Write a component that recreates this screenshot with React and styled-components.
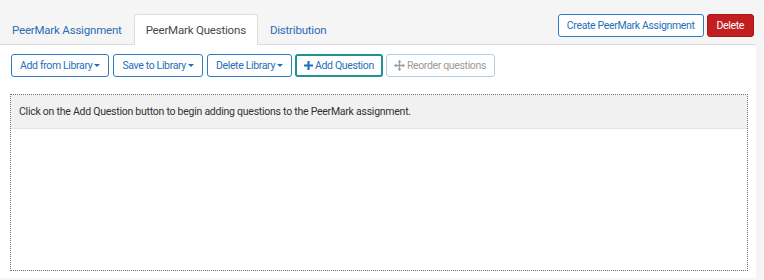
import styled, { createGlobalStyle } from "styled-components";

const GlobalStyle = createGlobalStyle`
  html, body {
    margin: 0;
    padding: 0;
    background: #f5f5f5;
    font-family: Roboto, "Liberation Sans", Arial, sans-serif;
  }
`;

const Panel = styled.div`
  width: 756px;
  height: 278px;
  display: flex;
  flex-direction: column;
`;

const Header = styled.div`
  height: 45px;
  box-sizing: border-box;
  display: flex;
  align-items: flex-end;
  justify-content: space-between;
  border-bottom: 1px solid #dcdcdc;
  padding-right: 2px;
`;

const Tabs = styled.div`
  display: flex;
  align-items: flex-end;
`;

const Tab = styled.div`
  height: 31px;
  box-sizing: border-box;
  padding: 0 11px;
  margin-bottom: -1px;
  display: flex;
  align-items: center;
  font-size: 11.5px;
  letter-spacing: -0.2px;
  color: ${(p) => (p.$active ? "#4a4a4a" : "#2b6cb5")};
  background: ${(p) => (p.$active ? "#fff" : "transparent")};
  border: 1px solid ${(p) => (p.$active ? "#dcdcdc" : "transparent")};
  border-bottom: none;
  border-radius: 4px 4px 0 0;
`;

const HeaderActions = styled.div`
  display: flex;
  gap: 3px;
  align-self: flex-start;
  margin-top: 14px;
`;

const Button = styled.button`
  height: 23px;
  box-sizing: border-box;
  padding: 0 8px;
  display: inline-flex;
  align-items: center;
  gap: 2px;
  font-family: inherit;
  font-size: 10.5px;
  letter-spacing: -0.35px;
  border-radius: 3px;
  cursor: pointer;
  background: #fff;
  color: #1f6fba;
  border: 1px solid #2f7cc4;
`;

const DangerButton = styled(Button)`
  background: #c11f1f;
  border-color: #a81818;
  color: #fff;
  padding: 0 9px;
`;

const FocusButton = styled(Button)`
  border: 2px solid #1e9295;
  padding: 0 7px;
  margin-left: -1px;
`;

const DisabledButton = styled(Button)`
  color: #9a9a9a;
  border-color: #b3cde3;
  cursor: default;
  padding: 0 8px 0 7px;
  margin-left: -1px;
`;

const Body = styled.div`
  flex: 1;
  background: #fff;
  padding: 9px 8px 7px 11px;
  display: flex;
  flex-direction: column;
`;

const Toolbar = styled.div`
  display: flex;
  gap: 4px;
`;

const Caret = styled.span`
  display: inline-block;
  width: 0;
  height: 0;
  border-left: 3px solid transparent;
  border-right: 3px solid transparent;
  border-top: 3px solid currentColor;
`;

const QuestionBox = styled.div`
  flex: 1;
  margin-top: 17px;
  margin-left: -1px;
  border: 1px dotted #6f6f6f;
`;

const BoxHeader = styled.div`
  height: 34px;
  box-sizing: border-box;
  padding: 0 8px;
  display: flex;
  align-items: center;
  background: #f1f1f1;
  border-bottom: 1px solid #e4e4e4;
  font-size: 10.5px;
  letter-spacing: -0.25px;
  color: #333;
`;

function PlusIcon() {
  return (
    <svg width="9" height="9" viewBox="0 0 10 10">
      <path d="M3.8 0h2.4v3.8H10v2.4H6.2V10H3.8V6.2H0V3.8h3.8z" fill="currentColor" />
    </svg>
  );
}

function MoveIcon() {
  return (
    <svg width="11" height="11" viewBox="0 0 12 12" fill="currentColor">
      <path d="M6 0L8.2 2.4H6.7V5.3H9.6V3.8L12 6L9.6 8.2V6.7H6.7V9.6H8.2L6 12L3.8 9.6H5.3V6.7H2.4V8.2L0 6L2.4 3.8V5.3H5.3V2.4H3.8Z" />
    </svg>
  );
}

export default function App() {
  return (
    <>
      <GlobalStyle />
      <Panel>
        <Header>
          <Tabs>
            <Tab>PeerMark Assignment</Tab>
            <Tab $active>PeerMark Questions</Tab>
            <Tab>Distribution</Tab>
          </Tabs>
          <HeaderActions>
            <Button>Create PeerMark Assignment</Button>
            <DangerButton>Delete</DangerButton>
          </HeaderActions>
        </Header>
        <Body>
          <Toolbar>
            <Button>
              Add from Library <Caret />
            </Button>
            <Button>
              Save to Library <Caret />
            </Button>
            <Button>
              Delete Library <Caret />
            </Button>
            <FocusButton>
              <PlusIcon /> Add Question
            </FocusButton>
            <DisabledButton>
              <MoveIcon /> Reorder questions
            </DisabledButton>
          </Toolbar>
          <QuestionBox>
            <BoxHeader>
              Click on the Add Question button to begin adding questions to the
              PeerMark assignment.
            </BoxHeader>
          </QuestionBox>
        </Body>
      </Panel>
    </>
  );
}
